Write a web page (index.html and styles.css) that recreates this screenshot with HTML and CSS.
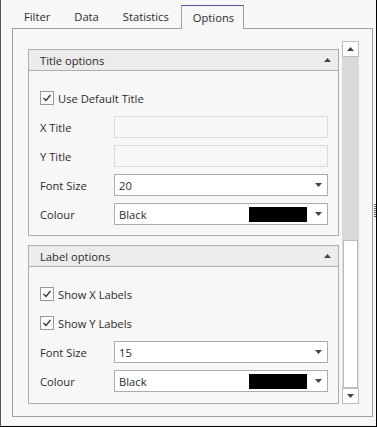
FILE: index.html
```html
<!DOCTYPE html>
<html lang="en">
<head>
    <meta charset="UTF-8">
    <title>Chart Options</title>
    <link rel="stylesheet" href="styles.css">
</head>
<body>
    <div class="window">
        <div class="tabs">
            <div class="tab">Filter</div>
            <div class="tab">Data</div>
            <div class="tab">Statistics</div>
            <div class="tab active">Options</div>
        </div>
        <div class="panel">
            <div class="content">
                <section class="group">
                    <div class="group-head">
                        <span>Title options</span>
                        <svg class="caret" width="7" height="4" viewBox="0 0 7 4"><polygon points="0,4 7,4 3.5,0"/></svg>
                    </div>
                    <div class="group-body">
                        <label class="row check">
                            <span class="box"><svg width="12" height="12" viewBox="0 0 12 12"><polyline points="2.5,6 5,8.5 9.5,3" /></svg></span>
                            Use Default Title
                        </label>
                        <div class="row"><span class="lbl">X Title</span><span class="input disabled"></span></div>
                        <div class="row"><span class="lbl">Y Title</span><span class="input disabled"></span></div>
                        <div class="row">
                            <span class="lbl">Font Size</span>
                            <span class="input combo"><span class="val">20</span>
                                <svg class="drop" width="7" height="4" viewBox="0 0 7 4"><polygon points="0,0 7,0 3.5,4"/></svg></span>
                        </div>
                        <div class="row">
                            <span class="lbl">Colour</span>
                            <span class="input combo"><span class="val">Black</span><span class="swatch"></span>
                                <svg class="drop" width="7" height="4" viewBox="0 0 7 4"><polygon points="0,0 7,0 3.5,4"/></svg></span>
                        </div>
                    </div>
                </section>
                <section class="group grow">
                    <div class="group-head">
                        <span>Label options</span>
                        <svg class="caret" width="7" height="4" viewBox="0 0 7 4"><polygon points="0,4 7,4 3.5,0"/></svg>
                    </div>
                    <div class="group-body">
                        <label class="row check">
                            <span class="box"><svg width="12" height="12" viewBox="0 0 12 12"><polyline points="2.5,6 5,8.5 9.5,3" /></svg></span>
                            Show X Labels
                        </label>
                        <label class="row check">
                            <span class="box"><svg width="12" height="12" viewBox="0 0 12 12"><polyline points="2.5,6 5,8.5 9.5,3" /></svg></span>
                            Show Y Labels
                        </label>
                        <div class="row">
                            <span class="lbl">Font Size</span>
                            <span class="input combo"><span class="val">15</span>
                                <svg class="drop" width="7" height="4" viewBox="0 0 7 4"><polygon points="0,0 7,0 3.5,4"/></svg></span>
                        </div>
                        <div class="row">
                            <span class="lbl">Colour</span>
                            <span class="input combo"><span class="val">Black</span><span class="swatch"></span>
                                <svg class="drop" width="7" height="4" viewBox="0 0 7 4"><polygon points="0,0 7,0 3.5,4"/></svg></span>
                        </div>
                    </div>
                </section>
            </div>
            <div class="scrollbar">
                <div class="sb-btn"><svg width="7" height="4" viewBox="0 0 7 4"><polygon points="0,4 7,4 3.5,0"/></svg></div>
                <div class="sb-track"></div>
                <div class="sb-thumb"></div>
                <div class="sb-btn"><svg width="7" height="4" viewBox="0 0 7 4"><polygon points="0,0 7,0 3.5,4"/></svg></div>
            </div>
        </div>
        <span class="grip"></span>
    </div>
</body>
</html>
```

FILE: styles.css
```css
* { box-sizing: border-box; }
body { margin: 0; background: #f7f7f7; font-family: "Open Sans", "Noto Sans", sans-serif; font-size: 11.2px; color: #2b2b2b; }

.window { position: relative; width: 377px; height: 427px; border-left: 1px solid #555; border-right: 1px solid #000; border-bottom: 1px solid #000; padding: 5px 3px 9px 11px; display: flex; flex-direction: column; }

/* tabs */
.tabs { display: flex; height: 23px; }
.tab { padding: 0 12px; display: flex; align-items: center; }
.tab.active { position: relative; z-index: 1; height: 24px; padding: 0 9px 0 11px; background: #f7f7f7; border: 1px solid #a0a0a0; border-top: 1px solid #5e5096; border-bottom: none; margin-bottom: -1px; }

.panel { flex: 1; border: 1px solid #a0a0a0; padding: 12px 13px 12px 15px; display: flex; gap: 3px; }

.content { flex: 1; padding-top: 8px; display: flex; flex-direction: column; gap: 9px; overflow: hidden; }

/* group boxes */
.group { border: 1px solid #adadad; display: flex; flex-direction: column; }
.group.grow { flex: 1; }
.group-head { height: 21px; background: #ececec; border-bottom: 1px solid #adadad; display: flex; align-items: center; justify-content: space-between; padding: 0 7px 0 11px; }
.group-body { padding: 16px 10px 10px 11px; display: flex; flex-direction: column; gap: 7px; }
.caret, .drop { fill: #444; }

.row { height: 22px; display: flex; align-items: center; }
.lbl { width: 74px; }
.input { flex: 1; height: 22px; border: 1px solid #dadada; }
.input.combo { background: #fff; border-color: #acacac; display: flex; align-items: center; padding: 0 5px 0 4px; }
.combo .val { flex: 1; }
.swatch { width: 58px; height: 15px; background: #000; margin-right: 8px; }

.check .box { width: 14px; height: 14px; border: 1px solid #999; background: #fbfbfb; margin-right: 4px; display: flex; align-items: center; justify-content: center; }
.check .box polyline { fill: none; stroke: #333; stroke-width: 1.3; }

/* scrollbar */
.scrollbar { width: 17px; display: flex; flex-direction: column; background: #dadada; }
.sb-btn { height: 16px; background: #fff; border: 1px solid #bdbdbd; display: flex; align-items: center; justify-content: center; }
.sb-btn svg { fill: #444; }
.sb-track { height: 183px; }
.sb-thumb { flex: 1; margin: 0 1px; background: #fff; border: 1px solid #bdbdbd; }

.grip { position: absolute; right: 0; top: 204px; width: 2px; height: 14px; background: repeating-linear-gradient(#666 0 1px, transparent 1px 2px); }
```
